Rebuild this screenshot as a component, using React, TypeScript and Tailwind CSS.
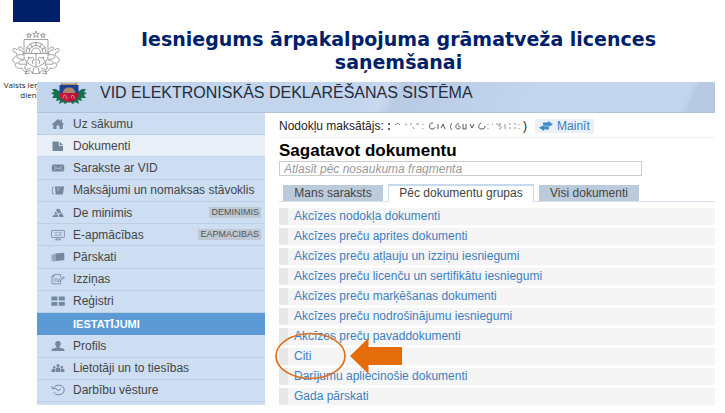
import type { ReactNode } from 'react'
import clsx from 'clsx'

type MenuItem = {
  label: string
  icon?: ReactNode
  badge?: string
  active?: boolean
  section?: boolean
}

const Icon = ({ children }: { children: ReactNode }) => (
  <svg viewBox="0 0 14 12" className="h-3 w-3.5 shrink-0 text-[#73879f]" fill="currentColor" aria-hidden="true">
    {children}
  </svg>
)

const menu: MenuItem[] = [
  {
    label: 'Uz sākumu',
    icon: <path d="M7 1 .5 6.600h1.700V11h3.400V7.400h2.800V11h3.400V6.600h1.700L11 4.200V1.600H9.600V3z" />,
  },
  {
    label: 'Dokumenti',
    active: true,
    icon: (
      <>
        <path d="M1.500 1.500h6.300v4.300H12V11H1.500z" />
        <path d="M8.700 1.800 12 5H8.700z" />
      </>
    ),
  },
  {
    label: 'Sarakste ar VID',
    icon: (
      <>
        <rect x="0.8" y="2.500" width="12.400" height="7" rx="1.500" />
        <path d="M2.500 4 7 6.800 11.500 4M2.500 8.300l2.800-2.200M11.500 8.300 8.700 6.100" fill="none" stroke="#cddef3" strokeWidth="0.6" />
      </>
    ),
  },
  {
    label: 'Maksājumi un nomaksas stāvoklis',
    icon: (
      <>
        <path d="M4 2.600h9.200l-1.400 8H4.600z" />
        <path d="M3 3 1.400 3.800v5.600l2 .8" fill="none" stroke="currentColor" strokeWidth="0.8" />
        <path d="M6 4.600h2.800M6 6.400h2" fill="none" stroke="#cddef3" strokeWidth="0.5" />
      </>
    ),
  },
  {
    label: 'De minimis',
    badge: 'DEMINIMIS',
    icon: (
      <>
        <path d="M5.500 2h3l1.800 3.400-2.400 1L5.400 4z" />
        <path d="M4.600 4.600 7 7H3.400zM3 7.800h4V10H1zM8 7.600l2.800-1.500L13 10H8z" />
      </>
    ),
  },
  {
    label: 'E-apmācības',
    badge: 'EAPMACIBAS',
    icon: (
      <g fill="none" stroke="currentColor" strokeWidth="0.8">
        <rect x="0.6" y="1.400" width="12.800" height="7.200" rx="0.6" />
        <path d="M4 10.800h6M5.600 8.800v2M8.400 8.800v2" />
        <path d="M3 3.400h8M3 6.600h8M4 5h2M8 4.200l1.800 1.600M9.800 4.200 8 5.800" strokeWidth="0.5" />
      </g>
    ),
  },
  {
    label: 'Pārskati',
    icon: (
      <>
        <path d="M4.400 2.400 13 1.800q.8 3.700 0 7.400l-8.600.8z" />
        <path d="M3.400 3v7.400M2.200 3.400v7M1 3.800v6" stroke="currentColor" strokeWidth="0.8" />
      </>
    ),
  },
  {
    label: 'Izziņas',
    icon: (
      <g fill="none" stroke="currentColor" strokeWidth="0.8">
        <path d="M3 1.600h6.600v2.600M9.600 8v2.800H1V3.600l2-2v2H1" />
        <path d="M2.600 6h4.200M2.600 8h2.800" />
        <path d="m6.600 8.600.6-1.600 5.200-3.200 1 1.200-5.200 3.200z" />
      </g>
    ),
  },
  {
    label: 'Reģistri',
    icon: <path d="M.4 1.600h6v3.900h-6zM7.800 1.600h6v3.900h-6zM.4 6.900h6v3.900h-6zM7.800 6.900h6v3.900h-6z" />,
  },
  { label: 'IESTATĪJUMI', section: true },
  {
    label: 'Profils',
    icon: <path d="M7 1c1.900 0 2.800 1.100 2.800 2.800 0 1.300-.6 2.400-1.400 3v.8l4.200 1.200c.7.3.9.9.9 2.200H.5c0-1.300.2-1.900.9-2.200l4.200-1.200v-.8c-.8-.6-1.400-1.700-1.400-3C4.200 2.100 5.100 1 7 1z" />,
  },
  {
    label: 'Lietotāji un to tiesības',
    icon: (
      <>
        <circle cx="7" cy="3.600" r="1.500" />
        <circle cx="3.200" cy="5.200" r="1.200" />
        <circle cx="10.800" cy="5.200" r="1.200" />
        <path d="M4.800 10V6.600c0-.8.8-1.200 2.200-1.200s2.200.4 2.200 1.200V10zM.6 10V8c0-.8.8-1.300 3.600-1.200V10zM13.400 10V8c0-.8-.8-1.300-3.600-1.200V10z" />
      </>
    ),
  },
  {
    label: 'Darbību vēsture',
    icon: (
      <g fill="none" stroke="currentColor" strokeWidth="1">
        <path d="M2.600 3.600C3.600 2 5.600 1.200 7.800 1.200c3 0 5.400 2.100 5.400 4.800s-2.400 4.800-5.400 4.800c-2.200 0-4-1-4.900-2.600" />
        <path d="M.6 2.200 1.800 4.800l3-.6M4.800 4.800l3 1.800 2.200-2" />
      </g>
    ),
  },
]

const groups = [
  'Akcīzes nodokļa dokumenti',
  'Akcīzes preču aprites dokumenti',
  'Akcīzes preču atļauju un izziņu iesniegumi',
  'Akcīzes preču licenču un sertifikātu iesniegumi',
  'Akcīzes preču marķēšanas dokumenti',
  'Akcīzes preču nodrošinājumu iesniegumi',
  'Akcīzes preču pavaddokumenti',
  'Citi',
  'Darījumu apliecinošie dokumenti',
  'Gada pārskati',
]

const OutlineCrest = () => (
  <svg viewBox="0 0 48 46" className="h-[46px] w-12" fill="none" stroke="#777" strokeWidth="0.7" aria-hidden="true">
    <path d="m24 1 .9 2.400h2.500l-2 1.500.8 2.500L24 5.900l-2.200 1.500.8-2.500-2-1.500h2.500zM17 3l.7 1.700h1.900l-1.500 1.200.5 1.800L17 6.700l-1.600 1 .5-1.800-1.500-1.200h1.900zM31 3l.7 1.700h1.900l-1.500 1.200.5 1.800L31 6.700l-1.600 1 .5-1.800-1.500-1.200h1.900z" />
    <path d="M12 9.500h24v17c0 5-6 8.500-12 11-6-2.500-12-6-12-11z" />
    <path d="M14 23c0-6 4-10.500 10-10.500S34 17 34 23M17 23c0-4.500 3-7.500 7-7.500s7 3 7 7.500M19.500 23c0-3 1.800-5 4.500-5s4.500 2 4.500 5" />
    <path d="M24 12v4M18 13.500l2.500 4M30 13.500l-2.500 4M14.500 17.500l4 2M33.500 17.500l-4 2M12 23.500h24M24 23.500V37" />
    <path d="M15 34c-1-2 0-4 2-5l-1-2 3 1c2-1 3 0 3 2l-2 1 1 3M33 34c1-2 0-4-2-5l1-2-3 1c-2-1-3 0-3 2l2 1-1 3" />
    <path d="M11 19c-3-4-6-1-4 1 3 0 5 2 4 5-3-1-6 0-6 2 2 3 5 1 7 3-4 0-6 2-5 4 4 1 6-1 8 1-2 1-3 3-2 4 3 1 4-1 6-1M37 19c3-4 6-1 4 1-3 0-5 2-4 5 3-1 6 0 6 2-2 3-5 1-7 3 4 0 6 2 5 4-4 1-6-1-8 1 2 1 3 3 2 4-3 1-4-1-6-1" />
    <path d="M5 20c-2-3-5-1-4 1s4 1 4 3-3 3-4 5 1 5 5 4M43 20c2-3 5-1 4 1s-4 1-4 3 3 3 4 5-1 5-5 4M3 34c0 4 4 5 7 4 1 4 5 5 8 2 2 5 10 5 12 0 3 3 7 2 8-2 3 1 7 0 7-4M22 38l-2 6M26 38l2 6M15 40l-2 4 5-1M33 40l2 4-5-1" />
  </svg>
)

const ColorCrest = () => (
  <svg viewBox="0 0 38 24" className="h-6 w-[38px] shrink-0" aria-hidden="true">
    <g fill="#12714f">
      <path d="M9 9 6 7 2 7l2 3-3 1 3 2-2 3 5 0-1 3 4-1-1 4 4-2 2 2 3-2 1 1V14z" />
      <path d="m29 9 3-2 4 0-2 3 3 1-3 2 2 3-5 0 1 3-4-1 1 4-4-2-2 2-3-2-1 1V14z" />
    </g>
    <path d="m11 0 2 1.500h12L27 0v3.500H11z" fill="#b8905a" />
    <path d="M9.500 3h19v9h-19z" fill="#1c3f94" />
    <path d="M12.500 12c.5-5 3-6.500 6.500-6.500s6 1.500 6.500 6.500z" fill="#a98768" />
    <path d="M9.500 11H19v9c-5-1-9.500-3-9.500-7z" fill="#c8173a" />
    <path d="M19 11h9.500v2c0 4-4.500 6-9.500 7z" fill="#b51535" />
    <path d="m13 16 1-3 2 1 1 3M21 16l1-3 2 1v3" fill="none" stroke="#d59aa9" strokeWidth="0.8" />
  </svg>
)

const Sidebar = () => (
  <nav className="flex w-[228px] shrink-0 flex-col bg-[#cddef3] pb-[3px]">
    {menu.map((item) => (
      <a
        key={item.label}
        href="#"
        className={clsx(
          'flex min-h-[22px] flex-1 items-center gap-2 border-b pr-1 pl-3.5 text-xs leading-4',
          item.section && 'border-[#5b9ad5] bg-[#5b9ad5] font-bold text-white',
          item.active && 'border-[#c5d5e8] bg-[#e9eff6] text-[#444]',
          !item.section && !item.active && 'border-[#bdcfe5] text-[#444]',
        )}
      >
        {item.icon ? <Icon>{item.icon}</Icon> : <span className="w-3.5" />}
        <span className={clsx('whitespace-nowrap', item.section && 'text-[11px]')}>{item.label}</span>
        {item.badge && (
          <span className="ml-auto bg-[#bdc8d4] px-0.5 text-[9px] leading-[11px] text-[#555]">{item.badge}</span>
        )}
      </a>
    ))}
  </nav>
)

const Callout = () => (
  <svg
    viewBox="0 0 130 48"
    className="pointer-events-none absolute -top-4 -left-1 h-12 w-[130px]"
    aria-hidden="true"
  >
    <ellipse cx="35.500" cy="24" rx="34.500" ry="22.500" fill="none" stroke="#e0701a" strokeWidth="1.700" />
    <path d="M75 24 93.500 6v9H127v18H93.500v9z" fill="#e46c0a" />
  </svg>
)

// Leftovers of the blanked-out taxpayer name and code
const MaskedName = () => (
  <svg viewBox="0 0 136 10" className="h-2.5 w-[136px]" fill="none" stroke="#8f8f8f" strokeWidth="1" aria-hidden="true">
    <path d="M2 2v2M2 7v2" stroke="#333" strokeWidth="1.500" />
    <path d="m8 4 3-2 2 2M18 3l2 1M24 2v2M29 3h3M26 6l1 2M36 3v1M36 7v1" />
    <path d="M46 2c-4-1-5 6-1 6 2 0 3-1 3-2M51 3v5M54 7l2-4 2 5M65 2c-2 2-2 5 0 7M72 3c-4-1-4 5-1 5s3-3 0-3M76 3v5h3V3M83 3l2 4 2-4M94 2c-3 1-3 6 0 6s4-1 4-3" stroke="#555" />
    <path d="M101 3v1M101 7v1M105 4l1-1M109 3h2M114 3h-2v2c3 0 3 3 0 3M118 3v5M122 3h2M122 7h2M127 3h2M127 7h2M132 3v1M132 7v1" />
  </svg>
)

const Content = () => (
  <main className="flex min-w-0 flex-1 flex-col bg-white pl-3.5 text-xs">
    <div className="flex h-[25px] items-center border-b border-[#eef0f2] pt-0.5 text-[#222]">
      <span className="whitespace-nowrap">Nodokļu maksātājs:&nbsp;</span>
      <MaskedName />
      <span>)</span>
      <button
        type="button"
        className="ml-2 flex h-3.5 items-center gap-1 bg-[#eaf0f6] px-1 leading-3.5 text-[#337fc3]"
      >
        <svg viewBox="0 0 14 10" className="h-2.5 w-3.5" fill="#3f8dcb" aria-hidden="true">
          <path d="M4 1.500h5V0l5 3.200-5 3.100V4.800H4zM10 5.200H5V3.700L0 6.800 5 10V8.500h5z" />
        </svg>
        Mainīt
      </button>
    </div>

    <h2 className="mt-[3px] text-[17px] leading-5 font-bold text-black">Sagatavot dokumentu</h2>
    <input
      type="text"
      aria-label="Atlasīt pēc nosaukuma fragmenta"
      placeholder="Atlasīt pēc nosaukuma fragmenta"
      className="h-[15px] w-5/6 border border-[#ccc] px-1 italic outline-none placeholder:text-[#999]"
    />

    <div role="tablist" className="mt-2 flex items-end border-b border-[#d6e1ec] pl-1 leading-4 text-[#444]">
      <button type="button" role="tab" aria-selected="false" className="h-4 w-[100px] bg-[#bccbdc]">
        Mans saraksts
      </button>
      <button
        type="button"
        role="tab"
        aria-selected="true"
        className="mr-[5px] -mb-px ml-[5px] h-[18px] w-[146px] border border-t-2 border-[#c6daed] border-b-white bg-white leading-[15px]"
      >
        Pēc dokumentu grupas
      </button>
      <button type="button" role="tab" aria-selected="false" className="h-4 w-[100px] bg-[#bccbdc]">
        Visi dokumenti
      </button>
    </div>

    <ul className="mt-1.5 flex flex-col gap-[3px]">
      {groups.map((group) => (
        <li
          key={group}
          className={clsx(
            'flex h-[17px] items-center border-l-[9px] border-[#e7e7e7] bg-[#f6f5f5] pl-1.5',
            group === 'Citi' && 'relative z-10',
          )}
        >
          <a href="#" className="leading-[15px] whitespace-nowrap text-[#3c7fc0]">
            {group}
          </a>
          {group === 'Citi' && (
            <div className="absolute inset-y-0 -left-[9px]">
              <Callout />
            </div>
          )}
        </li>
      ))}
    </ul>
  </main>
)

const App = () => {
  return (
    <div className="min-h-screen bg-white pb-2 font-['Liberation_Sans',Arial,sans-serif]">
      <header className="flex">
        <div className="flex w-[72px] shrink-0 flex-col items-center">
          <div className="h-[22px] w-[47px] bg-[#00206a]" />
          <div className="mt-2">
            <OutlineCrest />
          </div>
          <p className="mt-1 text-center font-['Open_Sans',sans-serif] text-[8px] leading-[10px] whitespace-nowrap text-[#222]">
            Valsts ieņēmumu
            <br />
            dienests
          </p>
        </div>
        <h1 className="flex-1 pt-7 text-center font-['DejaVu_Sans',Verdana,sans-serif] text-[19px] leading-[23px] font-bold text-[#00206a]">
          Iesniegums ārpakalpojuma grāmatveža licences
          <br />
          saņemšanai
        </h1>
      </header>

      <section className="relative -mt-[18px] mr-2.5 ml-[37px]">
        <div className="flex h-[31px] items-start gap-3 border-b border-[#b0c1da] bg-[linear-gradient(115deg,#c3d4ed_48%,#cad9f0_51%,#b9cae4_53%,#c3d4ed_72%,#c3d4ed_95%,#b7c9e3_96%)] pl-[13px]">
          <ColorCrest />
          <span className="text-base leading-[22px] whitespace-nowrap text-[#222c3c]">
            VID ELEKTRONISKĀS DEKLARĒŠANAS SISTĒMA
          </span>
        </div>
        <div className="flex">
          <Sidebar />
          <Content />
        </div>
      </section>
    </div>
  )
}

export default App
